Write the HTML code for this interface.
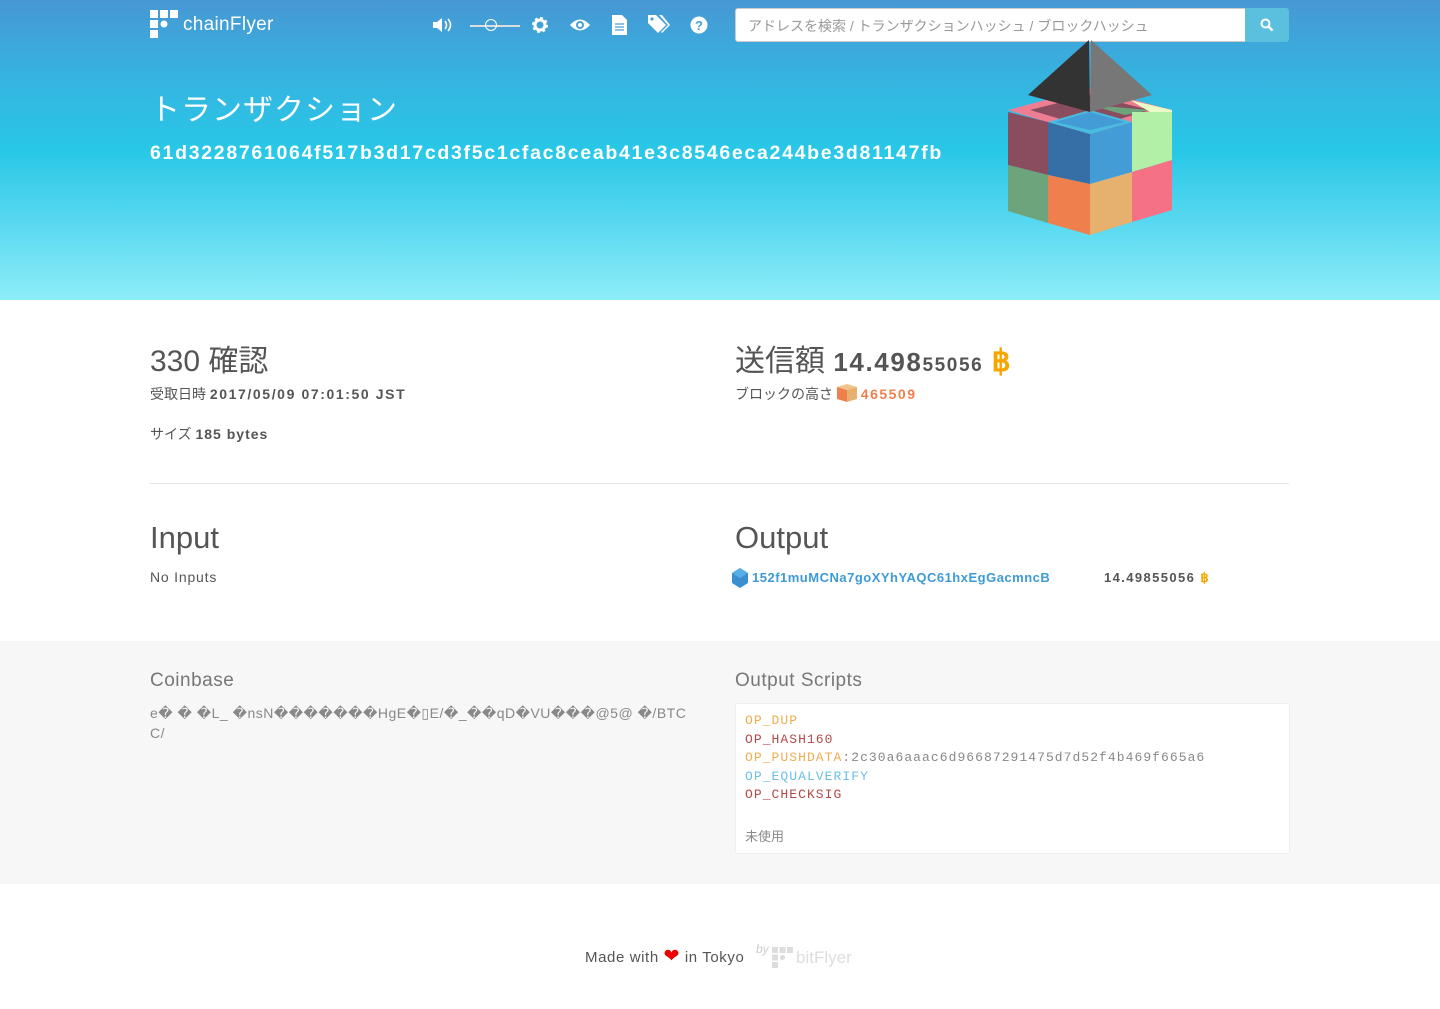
<!DOCTYPE html>
<html><head><meta charset="utf-8"><style>
*{box-sizing:border-box;margin:0;padding:0}
body{width:1440px;height:1009px;background:#fff;font-family:"Liberation Sans","Noto Sans CJK JP",sans-serif;color:#555;position:relative;overflow:hidden}
.hdr{position:absolute;left:0;top:0;width:1440px;height:300px;background:linear-gradient(180deg,#4797d3 0%,#36b3e0 25%,#28c7e7 50%,#5ad9f0 75%,#8eedf8 100%)}
.abs{position:absolute}
.w{color:#fff}
.mono{font-family:"Liberation Mono",monospace;font-size:13px;letter-spacing:1.05px;line-height:18.5px}
.bold{font-weight:bold}
</style></head><body>
<div class="hdr"></div>
<svg class="abs" style="left:150px;top:10px" width="30" height="30" viewBox="0 0 30 30" fill="#fff">
<rect x="0" y="0" width="8" height="8"/><rect x="10" y="0" width="8" height="8"/><rect x="20" y="0" width="8" height="8"/>
<rect x="0" y="10" width="8" height="8"/><circle cx="14" cy="14" r="3.5"/><rect x="0" y="20" width="8" height="8"/></svg>
<div class="abs w" style="left:183px;top:14px;font-size:19px;letter-spacing:.3px">chainFlyer</div>
<svg class="abs" style="left:432px;top:16px" width="22" height="18" viewBox="0 0 22 18" fill="#fff"><path d="M1 6h4l5-4v14l-5-4H1z"/><path d="M13 5q3 4 0 8M16 3q5 6 0 12" stroke="#fff" stroke-width="1.6" fill="none"/></svg>
<div class="abs" style="left:470px;top:25px;width:50px;height:2px;background:#ddd"></div>
<div class="abs" style="left:485px;top:19px;width:12px;height:12px;border:1.5px solid #fff;border-radius:50%"></div>
<svg class="abs" style="left:531px;top:16px" width="18" height="18" viewBox="0 0 18 18"><circle cx="9" cy="9" r="6" fill="none" stroke="#fff" stroke-width="4" stroke-dasharray="2.4 2.3"/><circle cx="9" cy="9" r="5" fill="none" stroke="#fff" stroke-width="3"/></svg>
<svg class="abs" style="left:569px;top:17px" width="22" height="16" viewBox="0 0 22 16"><path d="M1 8Q11-3 21 8Q11 19 1 8z" fill="#fff"/><circle cx="11" cy="8" r="4" fill="#4aa0d8"/><circle cx="11" cy="8" r="2" fill="#fff"/></svg>
<svg class="abs" style="left:612px;top:15px" width="15" height="20" viewBox="0 0 15 20"><path d="M0 0h10l5 5v15H0z" fill="#fff"/><path d="M3 9h9M3 12h9M3 15h9" stroke="#4aa0d8" stroke-width="1.3"/></svg>
<svg class="abs" style="left:648px;top:15px" width="22" height="20" viewBox="0 0 22 20" fill="#fff"><path d="M0 0h8l10 10-8 8L0 8z"/><path d="M11 0h3l8 10-8 8-1-1 7-7z"/><circle cx="4" cy="4" r="1.6" fill="#4aa0d8"/></svg>
<svg class="abs" style="left:690px;top:16px" width="18" height="18" viewBox="0 0 18 18"><circle cx="9" cy="9" r="8.5" fill="#fff"/><text x="9" y="14" text-anchor="middle" font-size="13" font-weight="bold" fill="#45a3da" font-family="Liberation Sans">?</text></svg>
<div class="abs" style="left:735px;top:8px;width:511px;height:34px;background:#fff;border:1px solid #ccc;border-radius:3px 0 0 3px;font-size:14px;color:#999;padding:7px 12px">アドレスを検索 / トランザクションハッシュ / ブロックハッシュ</div>
<div class="abs" style="left:1245px;top:8px;width:44px;height:34px;background:#5bc0de;border-radius:0 3px 3px 0"></div>
<svg class="abs" style="left:1260px;top:18px" width="14" height="14" viewBox="0 0 14 14"><circle cx="5.5" cy="5.5" r="4" fill="none" stroke="#fff" stroke-width="2"/><path d="M8.5 8.5l4 4" stroke="#fff" stroke-width="2.4"/></svg>
<div class="abs w" style="left:150px;top:85px;font-size:30px;letter-spacing:1px">トランザクション</div>
<div class="abs w bold" style="left:150px;top:142px;font-size:19.5px;letter-spacing:1.7px">61d3228761064f517b3d17cd3f5c1cfac8ceab41e3c8546eca244be3d81147fb</div>
<svg class="abs" style="left:990px;top:30px" width="200" height="220" viewBox="990 30 200 220">
<polygon points="1008,110 1090,88 1172,110 1090,135" fill="#ef7e92"/>
<polygon points="1030,110 1090,95 1150,110 1090,128" fill="#8a4d60"/>
<polygon points="1090,105 1150,110 1125,115" fill="#6ea47b"/>
<polygon points="1130,100 1172,110 1172,112 1150,112" fill="#eafbc7"/>
<polygon points="1008,112 1048,122 1048,175 1008,165" fill="#8a4d60"/>
<polygon points="1008,165 1048,175 1048,223 1008,211" fill="#6ea47b"/>
<polygon points="1048,122 1090,134 1090,184 1048,175" fill="#356fa6"/>
<polygon points="1090,134 1132,122 1132,172 1090,184" fill="#449cd6"/>
<polygon points="1048,122 1090,110 1132,122 1090,134" fill="#49bde0"/>
<polygon points="1055,122 1090,112 1125,122 1090,130" fill="#449cd6"/>
<polygon points="1132,112 1172,112 1172,160 1132,172" fill="#b2f0a8"/>
<polygon points="1048,175 1090,184 1090,235 1048,223" fill="#ef804d"/>
<polygon points="1090,184 1132,172 1132,222 1090,235" fill="#e6b06f"/>
<polygon points="1132,172 1172,160 1172,210 1132,222" fill="#f57185"/>
<polygon points="1089,40 1090,112 1028,95" fill="#333"/>
<polygon points="1091,40 1152,95 1090,112" fill="#777"/>
</svg>
<div class="abs" style="left:150px;top:336px;font-size:30px;color:#555">330 確認</div>
<div class="abs" style="left:150px;top:384px;font-size:14px;color:#555">受取日時 <b style="letter-spacing:1.6px">2017/05/09 07:01:50 JST</b></div>
<div class="abs" style="left:150px;top:424px;font-size:14px;color:#555">サイズ <b style="letter-spacing:1px">185 bytes</b></div>
<div class="abs" style="left:735px;top:336px;font-size:30px;color:#555">送信額 <b style="font-size:26px;letter-spacing:1.6px">14.498<span style="font-size:19px">55056</span></b> <b style="color:#f7a600">฿</b></div>
<div class="abs" style="left:735px;top:384px;font-size:14px;color:#555">ブロックの高さ <svg width="20" height="18" viewBox="0 0 20 18" style="vertical-align:-3px"><polygon points="0,3 10,0 20,3 10,6" fill="#f2c38b"/><polygon points="0,3 10,6 10,18 0,15" fill="#ef804d"/><polygon points="10,6 20,3 20,15 10,18" fill="#e6b06f"/></svg> <b style="color:#ef804d;letter-spacing:1.5px">465509</b></div>
<div class="abs" style="left:150px;top:483px;width:1139px;height:1px;background:#e6e6e6"></div>
<div class="abs" style="left:150px;top:520px;font-size:31px;color:#555">Input</div>
<div class="abs" style="left:150px;top:569px;font-size:14px;color:#555;letter-spacing:.8px">No Inputs</div>
<div class="abs" style="left:735px;top:520px;font-size:31px;color:#555">Output</div>
<svg class="abs" style="left:731px;top:568px" width="18" height="20" viewBox="0 0 18 20"><polygon points="9,0 17,5 17,15 9,20 1,15 1,5" fill="#3b8fd0"/><polygon points="9,0 17,5 9,10 1,5" fill="#5aaee6"/></svg>
<div class="abs bold" style="left:752px;top:570px;font-size:13px;color:#3d9ad8;letter-spacing:.5px">152f1muMCNa7goXYhYAQC61hxEgGacmncB</div>
<div class="abs bold" style="left:1104px;top:570px;font-size:13px;color:#555;letter-spacing:1.4px">14.49855056 <span style="color:#f7a600">฿</span></div>
<div class="abs" style="left:0;top:641px;width:1440px;height:243px;background:#f7f7f7"></div>
<div class="abs" style="left:150px;top:670px;font-size:19px;color:#777;letter-spacing:.5px">Coinbase</div>
<div class="abs" style="left:150px;top:703px;width:560px;font-size:14px;color:#888;line-height:20px;letter-spacing:.5px">e� � �L_ �nsN�������HgE�▯E/�_��qD�VU���@5@ �/BTC<br>C/</div>
<div class="abs" style="left:735px;top:670px;font-size:19px;color:#777;letter-spacing:.5px">Output Scripts</div>
<div class="abs" style="left:735px;top:703px;width:555px;height:151px;background:#fff;border:1px solid #eee;border-radius:3px"></div>
<div class="abs mono" style="left:745px;top:712px">
<div style="color:#f0ad4e">OP_DUP</div>
<div style="color:#b04a4a">OP_HASH160</div>
<div><span style="color:#f0ad4e">OP_PUSHDATA</span><span style="color:#888">:2c30a6aaac6d96687291475d7d52f4b469f665a6</span></div>
<div style="color:#6cbfe6">OP_EQUALVERIFY</div>
<div style="color:#b04a4a">OP_CHECKSIG</div>
</div>
<div class="abs" style="left:745px;top:826px;font-size:13px;color:#888">未使用</div>
<div class="abs" style="left:585px;top:945px;font-size:15px;color:#555;letter-spacing:.6px">Made with <span style="color:#e00;font-size:19px">❤</span> in Tokyo</div>
<div class="abs" style="left:756px;top:942px;font-size:12px;color:#ccc;font-style:italic">by</div>
<svg class="abs" style="left:772px;top:947px" width="22" height="22" viewBox="0 0 22 22" fill="#ddd"><rect x="0" y="0" width="6" height="6"/><rect x="7.5" y="0" width="6" height="6"/><rect x="15" y="0" width="6" height="6"/><rect x="0" y="7.5" width="6" height="6"/><circle cx="10.5" cy="10.5" r="2.6"/><rect x="0" y="15" width="6" height="6"/></svg>
<div class="abs" style="left:796px;top:948px;font-size:17px;color:#ddd">bitFlyer</div>
</body></html>
